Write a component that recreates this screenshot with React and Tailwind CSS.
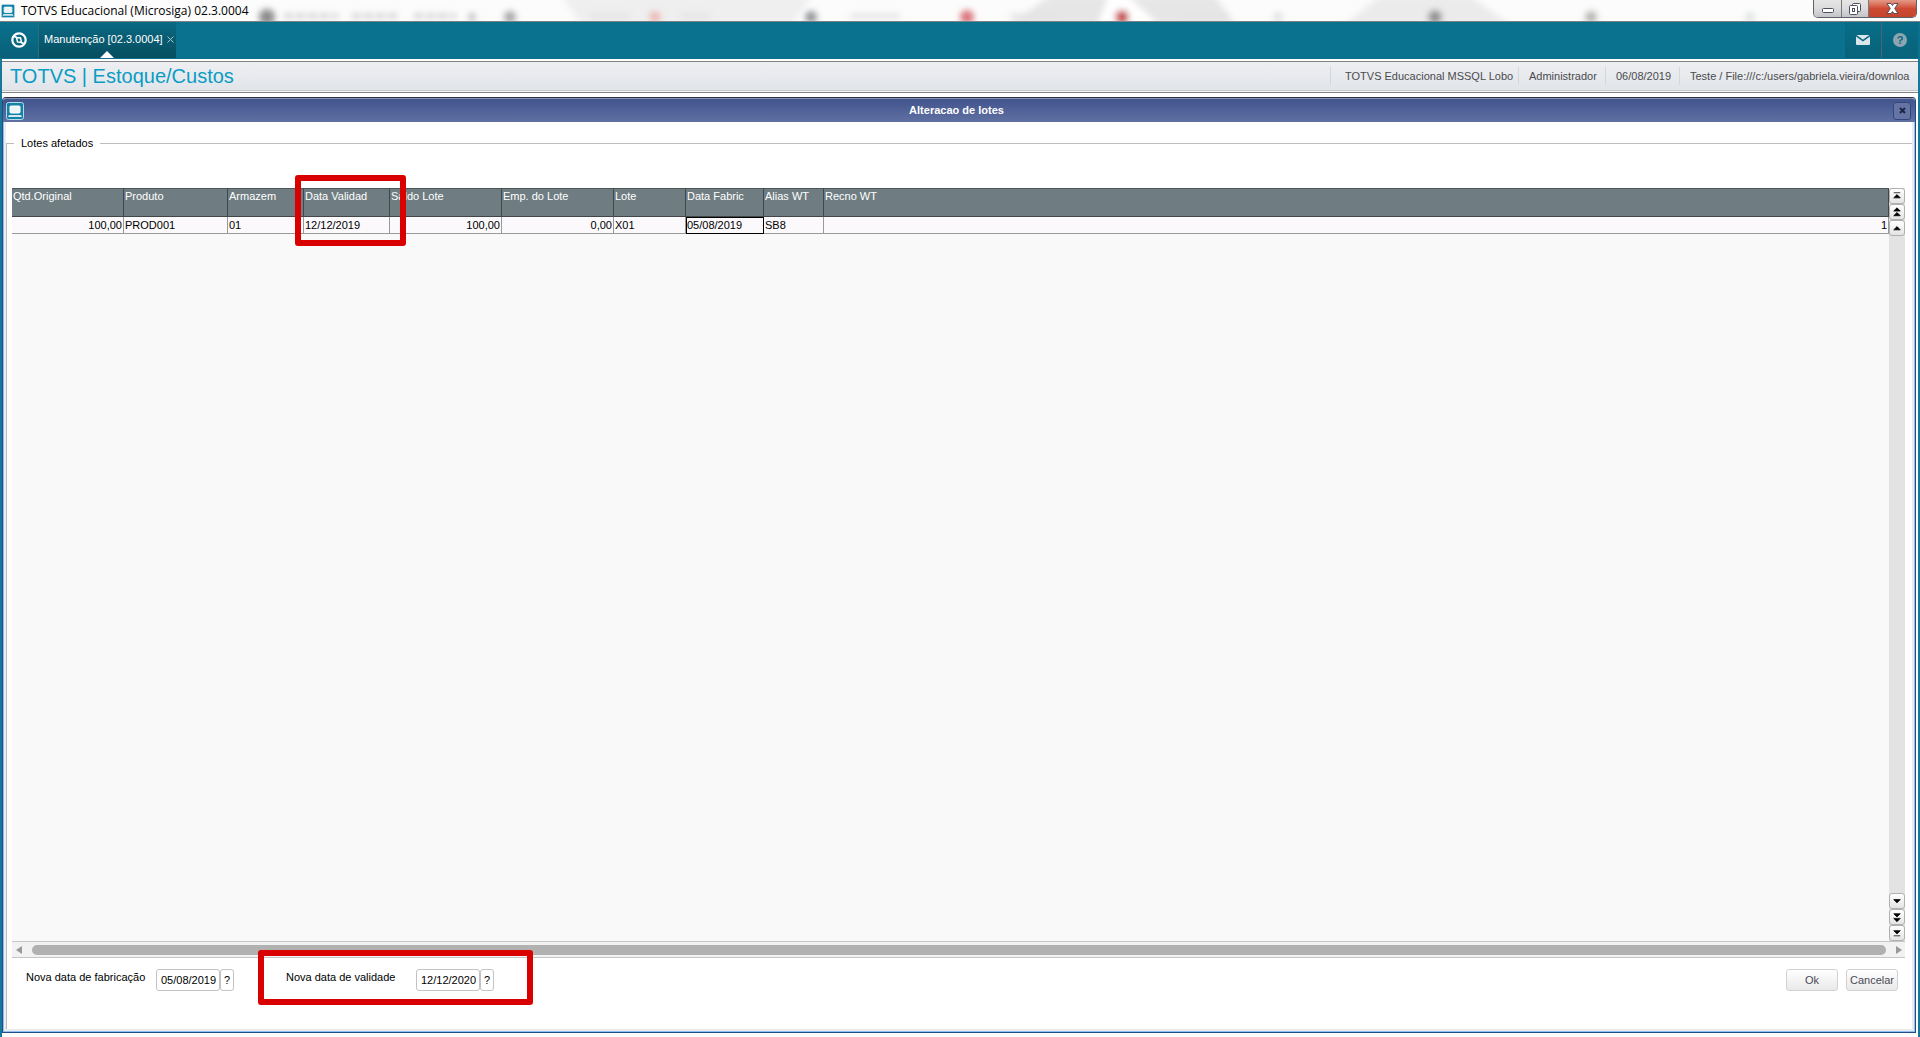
import { useState } from 'react';

const columns = [
  { title: 'Qtd.Original', value: '100,00', width: 'w-[112px]', align: 'text-right' },
  { title: 'Produto', value: 'PROD001', width: 'w-[104px]', align: 'text-left' },
  { title: 'Armazem', value: '01', width: 'w-[76px]', align: 'text-left' },
  { title: 'Data Validad', value: '12/12/2019', width: 'w-[86px]', align: 'text-left' },
  { title: 'Saldo Lote', value: '100,00', width: 'w-[112px]', align: 'text-right' },
  { title: 'Emp. do Lote', value: '0,00', width: 'w-[112px]', align: 'text-right' },
  { title: 'Lote', value: 'X01', width: 'w-[72px]', align: 'text-left' },
  { title: 'Data Fabric', value: '05/08/2019', width: 'w-[78px]', align: 'text-left', selected: true },
  { title: 'Alias WT', value: 'SB8', width: 'w-[60px]', align: 'text-left' },
  { title: 'Recno WT', value: '1', width: '', align: 'text-right' },
];

const session = [
  { text: 'TOTVS Educacional MSSQL Lobo', size: 'w-[188px] pl-3.5' },
  { text: 'Administrador', size: 'w-[87px] pl-2.5' },
  { text: '06/08/2019', size: 'w-[74px] pl-2.5' },
  { text: 'Teste / File:///c:/users/gabriela.vieira/downloa', size: 'w-[239px] pl-2.5' },
];

// what shows through the glass title bar
const smudges = [
  { x: 267, r: 8, color: '#8c8c8c' },
  { x: 510, r: 6, color: '#a5a5a5' },
  { x: 655, r: 6, color: '#ecb8b4' },
  { x: 811, r: 6, color: '#8f9296' },
  { x: 967, r: 7, color: '#d9767a' },
  { x: 1122, r: 7, color: '#c84a4a' },
  { x: 1278, r: 5, color: '#dfe3e0' },
  { x: 1435, r: 7, color: '#8f8f8f' },
  { x: 1591, r: 6, color: '#b4b4ae' },
  { x: 1750, r: 5, color: '#dde3de' },
];

function TerminalIcon({ className }) {
  return (
    <svg viewBox="0 0 18 18" className={className} aria-hidden="true">
      <rect x="0.5" y="0.5" width="17" height="17" rx="2" fill="#1283a6" stroke="#b5d9e6" />
      <rect x="4" y="4" width="10" height="7" rx="1" fill="#eef3f6" stroke="#fff" />
      <path d="M3 13h12l1 2H2z" fill="#d5e8ef" />
    </svg>
  );
}

function GlassBackdrop() {
  return (
    <svg className="absolute inset-0 w-full h-full" aria-hidden="true">
      <defs>
        <filter id="soft" x="-50%" y="-50%" width="200%" height="200%">
          <feGaussianBlur stdDeviation="3" />
        </filter>
      </defs>
      <g filter="url(#soft)">
        <path d="M562 -4h250l-20 28H580z" fill="#efefef" />
        <path d="M1050 -4h165l20 28h-225z" fill="#e6e6e6" />
        <path d="M1108 -4h20l30 28h-60z" fill="#fff" />
        <path d="M1380 -4h90l40 28h-165z" fill="#ebebeb" />
        <path d="M284 16h54M352 16h48M414 16h42" stroke="#cfcfcf" strokeWidth="5" strokeDasharray="9 3" />
        <path d="M590 16h40M680 16h30M850 16h50M1010 16h50M1180 16h50" stroke="#e3e3e3" strokeWidth="5" />
        <path d="M469 17h6" stroke="#a9a9a9" strokeWidth="6" />
        {smudges.map((s) => (
          <circle key={s.x} cx={s.x} cy="17" r={s.r} fill={s.color} />
        ))}
      </g>
    </svg>
  );
}

function TitleBar() {
  return (
    <div className="relative flex h-[22px] overflow-hidden border-b border-[#7d8181] bg-[#fcfcfc]">
      <GlassBackdrop />
      <div className="relative flex flex-1 items-center gap-1.5 pl-px">
        <TerminalIcon className="h-3.5 w-3.5" />
        <span className="font-['Open_Sans','Noto_Sans',sans-serif] text-[12px] leading-5 text-black">
          TOTVS Educacional (Microsiga) 02.3.0004
        </span>
      </div>
      <div className="relative mr-[3px] flex h-[18px] overflow-hidden rounded-b-[5px] border border-t-0 border-[#5f5f66]">
        <button aria-label="Minimizar" className="flex w-7 items-center justify-center border-r border-[#77777c] bg-linear-to-b from-[#e6e6e6] via-[#dcdcde] to-[#c4c4c8]">
          <svg viewBox="0 0 12 6" className="mt-1 h-1.5 w-3"><rect x="0.5" y="0.5" width="11" height="4" rx="1" fill="#fff" stroke="#4d5060" /></svg>
        </button>
        <button aria-label="Restaurar" className="flex w-[27px] items-center justify-center border-r border-[#77777c] bg-linear-to-b from-[#e6e6e6] via-[#dcdcde] to-[#c4c4c8]">
          <svg viewBox="0 0 13 12" className="h-3 w-[13px]" fill="#fff" stroke="#4d5060">
            <rect x="3.5" y="0.5" width="8" height="8" rx="1" />
            <rect x="0.5" y="2.5" width="8" height="9" rx="1" />
            <rect x="3.5" y="5.5" width="2" height="3" />
          </svg>
        </button>
        <button aria-label="Fechar" className="flex w-[47px] items-center justify-center bg-linear-to-b from-[#e49a88] via-[#cf4a34] to-[#c4452b]">
          <svg viewBox="0 0 13 11" className="h-[11px] w-[13px]">
            <path d="M1 .5h4l1.500 2 1.500-2h4L8.700 5.500l3.300 5H8l-1.500-2-1.500 2H1l3.300-5z" fill="#fff" stroke="#54525c" />
          </svg>
        </button>
      </div>
    </div>
  );
}

function TabBar() {
  return (
    <nav className="flex h-9 items-stretch bg-[#0a728e]">
      <button aria-label="Início" className="flex w-[39px] items-center justify-center border-r border-[#2a6f80] bg-linear-to-b from-[#0a728e] to-[#086078] pb-px">
        <svg viewBox="0 0 16 16" className="h-4 w-4" fill="none" stroke="#fff">
          <circle cx="8" cy="8" r="6.700" strokeWidth="2.200" />
          <path d="M5.500 5.500l4 .5 1 4.500-4-.6z" strokeWidth="1.500" />
          <path d="M2.500 4l3 1.500M13.500 12l-3-1.500" strokeWidth="1.500" />
        </svg>
      </button>
      <div className="relative flex w-[137px] items-center gap-1 bg-linear-to-b from-[#096a84] to-[#074d5f] pb-px pl-[5px] text-white">
        <span className="whitespace-nowrap">Manutenção [02.3.0004]</span>
        <button aria-label="Fechar aba">
          <svg viewBox="0 0 7 7" className="h-[7px] w-[7px]" stroke="#a9c7d0"><path d="M.5.500l6 6M6.500.500l-6 6" /></svg>
        </button>
        <svg viewBox="0 0 14 7" className="absolute bottom-0 left-[61px] h-[7px] w-3.5"><path d="M7 0l7 7H0z" fill="#fff" /></svg>
      </div>
      <div className="flex-1" />
      <button aria-label="Mensagens" className="flex w-[37px] items-center justify-center border-r border-[#4b666c] bg-linear-to-b from-[#086d88] to-[#08627a] pb-px">
        <svg viewBox="0 0 14 10" className="h-2.5 w-3.5">
          <rect width="14" height="10" rx="1" fill="#dbe6ec" />
          <path d="M0 .5l7 5 7-5" fill="none" stroke="#08677f" strokeWidth="1.500" />
        </svg>
      </button>
      <button aria-label="Ajuda" className="flex w-9 items-center justify-center bg-linear-to-b from-[#086d88] to-[#08627a] pb-px">
        <span className="h-3.5 w-3.5 rounded-full bg-[#8da5b0] text-[11px] leading-3.5 font-bold text-[#086780]">?</span>
      </button>
      <div className="w-0.5" />
    </nav>
  );
}

function Header() {
  return (
    <header className="mx-0.5 flex h-8 items-center border-y border-[#828486] bg-linear-to-b from-[#eeeff3] to-[#e0e4e8] pb-0.5 pl-2 shadow-[inset_0_-1px_0_#f4f6f7,inset_0_-2px_0_#c5c9cc]">
      <h1 className="flex-1 text-[20px] leading-6 text-[#0b9cc4]">TOTVS | Estoque/Custos</h1>
      <div className="flex items-center leading-[18px] text-[#4b4b4d]">
        {session.map((item) => (
          <span key={item.text} className={`${item.size} overflow-hidden border-l border-[#d3d8d9] whitespace-nowrap`}>
            {item.text}
          </span>
        ))}
      </div>
    </header>
  );
}

const arrows = {
  first: 'M4 4h7M4 9.500l3.500-3.500 3.500 3.500z',
  pageUp: 'M4 6.500l3.500-3.500 3.500 3.500zM4 11.500l3.500-3.500 3.500 3.500z',
  up: 'M4 9.500l3.500-3.500 3.500 3.500z',
  down: 'M4 6l3.500 3.500 3.500-3.500z',
  pageDown: 'M4 4l3.500 3.500 3.500-3.500zM4 9l3.500 3.500 3.500-3.500z',
  last: 'M4 5l3.500 3.500 3.500-3.500zM4 10.500h7',
};

function ScrollButton({ kind, label }) {
  return (
    <button aria-label={label} className="h-4 w-4 rounded-[3px] border border-[#b0b0b0] bg-linear-to-b from-white to-[#e4e4e4]">
      <svg viewBox="0 0 15 15" className="h-3.5 w-3.5"><path d={arrows[kind]} fill="#000" stroke="#000" strokeWidth="0.800" /></svg>
    </button>
  );
}

function LotesGrid() {
  return (
    <div className="flex flex-1 flex-col">
      <div className="relative flex flex-1">
        <div className="flex-1 bg-[#f9f9f9]">
          <table className="w-full table-fixed border-separate border-spacing-0">
            <thead>
              <tr className="h-[29px] bg-[#6f7d82] text-white">
                {columns.map((c) => (
                  <th key={c.title} className={`${c.width} border-t border-r border-b border-t-[#4c5659] border-r-[#414749] border-b-[#414749] p-0 pl-px text-left align-top leading-[14px] font-normal`}>
                    {c.title}
                  </th>
                ))}
              </tr>
            </thead>
            <tbody>
              <tr className="h-[17px] bg-[#fbf9fb] text-black">
                {columns.map((c) => (
                  <td key={c.title} className={`${c.align} ${c.selected ? 'outline-1 -outline-offset-1 outline-black' : ''} border-r border-b border-[#9a9a9a] p-0 pr-px pl-px leading-4`}>
                    {c.value}
                  </td>
                ))}
              </tr>
            </tbody>
          </table>
        </div>
        <div className="flex w-4 flex-col bg-[#e3e3e3]">
          <ScrollButton kind="first" label="Primeiro" />
          <ScrollButton kind="pageUp" label="Página acima" />
          <ScrollButton kind="up" label="Acima" />
          <div className="flex-1" />
          <ScrollButton kind="down" label="Abaixo" />
          <ScrollButton kind="pageDown" label="Página abaixo" />
          <ScrollButton kind="last" label="Último" />
        </div>
        <div className="pointer-events-none absolute -top-[13px] left-[283px] h-[71px] w-[111px] rounded-[3px] border-6 border-[#d90000]" />
      </div>
      <div className="flex h-[17px] items-center gap-2.5 border-y border-[#c6c6c6] bg-[#f2f2f2] pr-[3px] pl-1">
        <svg viewBox="0 0 6 8" className="h-2 w-1.5"><path d="M6 0v8L0 4z" fill="#999" /></svg>
        <div className="h-2.5 flex-1 rounded-full bg-[#b1b1b1]" />
        <svg viewBox="0 0 6 8" className="h-2 w-1.5"><path d="M0 0v8l6-4z" fill="#999" /></svg>
      </div>
    </div>
  );
}

function DateField({ id, label, value, onChange }) {
  return (
    <div className="flex items-start">
      <label htmlFor={id} className="w-[130px] leading-4 text-black">{label}</label>
      <input
        id={id}
        value={value}
        onChange={(e) => onChange(e.target.value)}
        className="h-[22px] w-16 rounded-[3px] border border-[#c3c3c3] bg-white pl-1 text-black outline-none"
      />
      <button aria-label="Calendário" className="h-[22px] w-3.5 rounded-[3px] border border-[#c3c3c3] bg-white text-center text-black">?</button>
    </div>
  );
}

export default function App() {
  const [fabricacao, setFabricacao] = useState('05/08/2019');
  const [validade, setValidade] = useState('12/12/2020');

  return (
    <div className="flex min-h-screen flex-col bg-white font-['Liberation_Sans',Arial,sans-serif] text-[11px]">
      <TitleBar />
      <div className="bg-[#0a728e] pb-px">
        <TabBar />
      </div>
      <div className="flex flex-1 flex-col border-x-2 border-[#17789a] pt-0.5">
        <div className="-mx-0.5">
          <Header />
        </div>

        <section className="mt-1 mr-0.5 mb-1 flex flex-1 flex-col rounded-t-[4px] border border-[#1d4f86] border-t-[#2b3040] bg-white">
          <div className="flex h-6 items-center rounded-t-[3px] border-t border-[#8590b3] bg-linear-to-b from-[#41548d] to-[#6070a2] pr-1 pl-[3px]">
            <TerminalIcon className="h-[18px] w-[18px]" />
            <h2 className="flex-1 pr-1 text-center font-bold text-white">Alteracao de lotes</h2>
            <button aria-label="Fechar" className="flex h-[18px] w-[18px] items-center justify-center rounded-[3px] border border-[#33467c] bg-[#6674a5]">
              <svg viewBox="0 0 7 7" className="h-[7px] w-[7px]" stroke="#1e2742" strokeWidth="2"><path d="M1 1l5 5M6 1L1 6" /></svg>
            </button>
          </div>

          <div className="flex flex-1 flex-col border border-t-0 border-[#8fc0f0]">
            <div role="group" aria-labelledby="lotes" className="flex flex-1 flex-col border-x-2 border-b-2 border-[#ececee] pt-[13px]">
              <div className="flex h-4 items-center">
                <div className="w-2 border-t border-[#bdbdbd]" />
                <span id="lotes" className="px-[7px] leading-4 text-black">Lotes afetados</span>
                <div className="flex-1 border-t border-[#bdbdbd]" />
              </div>
              <div className="-mt-2 flex flex-1 flex-col border-l border-[#bdbdbd] pt-[45px] pr-[7px] pl-[5px]">
                <LotesGrid />
                <div className="flex h-[71px] items-start pt-[11px] pr-[7px]">
                  <div className="pl-3.5">
                    <DateField id="fabricacao" label="Nova data de fabricação" value={fabricacao} onChange={setFabricacao} />
                  </div>
                  <div className="relative ml-[52px]">
                    <DateField id="validade" label="Nova data de validade" value={validade} onChange={setValidade} />
                    <div className="pointer-events-none absolute -top-[19px] -left-7 h-[55px] w-[275px] rounded-[3px] border-6 border-[#d90000]" />
                  </div>
                  <div className="flex-1" />
                  <div className="flex gap-2 text-[#4a4a55]">
                    <button className="h-[22px] w-[52px] rounded-[3px] border border-[#d2d2d2] bg-linear-to-b from-white to-[#e9e9e9]">Ok</button>
                    <button className="h-[22px] w-[52px] rounded-[3px] border border-[#d2d2d2] bg-linear-to-b from-white to-[#e9e9e9]">Cancelar</button>
                  </div>
                </div>
              </div>
            </div>
          </div>
        </section>
      </div>
    </div>
  );
}
